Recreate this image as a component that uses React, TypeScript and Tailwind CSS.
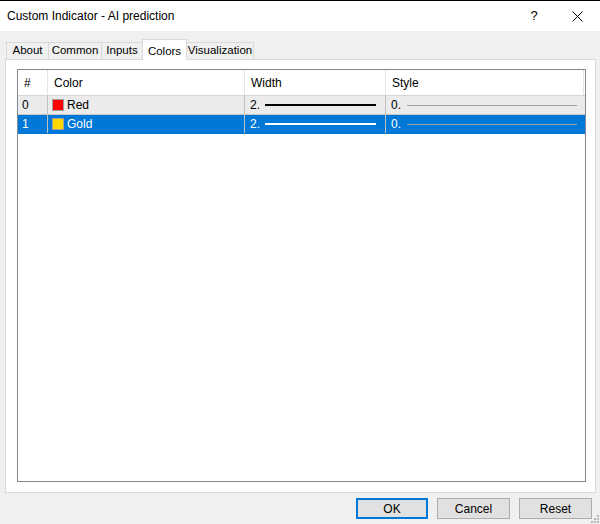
import React from 'react'

const FONT = { fontFamily: '"Liberation Sans", Arial, sans-serif' }

interface Tab {
  label: string
  cls: string
}

// widths include borders, laid edge to edge like the win32 tab strip
const TABS: Tab[] = [
  { label: 'About', cls: 'w-[42px] border-l' },
  { label: 'Common', cls: 'w-[53px] border-l' },
  { label: 'Inputs', cls: 'w-[41px] border-l' },
  { label: 'Colors', cls: 'w-[45px] border-l border-r' },
  { label: 'Visualization', cls: 'w-[67px] border-r' },
]

interface Row {
  idx: number
  name: string
  swatch: string
  selected: boolean
}

const ROWS: Row[] = [
  { idx: 0, name: 'Red', swatch: 'bg-[#ff0000]', selected: false },
  { idx: 1, name: 'Gold', swatch: 'bg-[#ffd700]', selected: true },
]

function ListRow({ row }: { row: Row }) {
  const sel = row.selected
  return (
    <div
      className={`flex h-[19px] text-[12px] leading-none border-b ${
        sel ? 'bg-[#0078d7] text-white border-[#0078d7]' : 'bg-[#ebebeb] text-black border-[#c8c8c8]'
      }`}
    >
      <div className="w-[30px] flex items-center pl-[4px] border-r border-[#c0c0c0]">{row.idx}</div>
      <div className="w-[197px] flex items-center pl-[4px] border-r border-[#c0c0c0]">
        <span className={`w-[12px] h-[12px] border border-[#a0a0a0] mr-[3px] ${row.swatch}`} />
        {row.name}
      </div>
      <div className="w-[141px] flex items-center pl-[5px] border-r border-[#c0c0c0]">
        <span>2.</span>
        <span className={`ml-[5px] w-[111px] h-[2px] ${sel ? 'bg-white' : 'bg-black'}`} />
      </div>
      <div className="w-[198px] flex items-center pl-[5px]">
        <span>0.</span>
        <span className="ml-[6px] w-[170px] h-px bg-[#a0a0a0]" />
      </div>
    </div>
  )
}

export default function App() {
  return (
    <div className="w-[600px] h-[524px] bg-[#f0f0f0] border-t border-black flex flex-col relative overflow-hidden" style={FONT}>
      {/* title bar */}
      <div className="h-[30px] bg-white flex items-center justify-between pl-[7px] text-[12px] text-black">
        <span className="pb-[1px]">Custom Indicator - AI prediction</span>
        <div className="flex items-center h-full">
          <span className="w-[40px] text-center text-[13px]">?</span>
          <span className="w-[46px] text-center">
            <svg width="11" height="11" viewBox="0 0 11 11" className="inline-block">
              <path d="M0.5 0.5 L10.5 10.5 M10.5 0.5 L0.5 10.5" stroke="#000" strokeWidth="1" />
            </svg>
          </span>
        </div>
      </div>

      {/* tabs */}
      <div className="mt-[8px] flex items-end h-[20px] pl-[6px] text-[11.5px] text-black">
        {TABS.map((t) => {
          const active = t.label === 'Colors'
          return (
            <div
              key={t.label}
              className={`${t.cls} flex justify-center whitespace-nowrap border-t border-[#d9d9d9] relative ${
                active ? 'h-[21px] -mb-px bg-white z-10 items-start pt-[3px]' : 'h-[17px] bg-[#f0f0f0] items-center'
              }`}
            >
              {t.label}
            </div>
          )
        })}
      </div>

      {/* tab panel */}
      <div className="ml-[5px] w-[591px] h-[434px] bg-white border border-[#d9d9d9] pt-[9px] pl-[11px] pr-[9px] pb-[10px]">
        <div className="w-full h-full border border-[#828790] bg-white flex flex-col">
          <div className="flex h-[26px] text-[12px] text-black border-b border-[#d5d5d5]">
            <div className="w-[30px] flex items-center pl-[6px] border-r border-[#e5e5e5]">#</div>
            <div className="w-[197px] flex items-center pl-[6px] border-r border-[#e5e5e5]">Color</div>
            <div className="w-[141px] flex items-center pl-[6px] border-r border-[#e5e5e5]">Width</div>
            <div className="w-[198px] flex items-center pl-[6px] border-r border-[#e5e5e5]">Style</div>
          </div>
          {ROWS.map((r) => (
            <ListRow key={r.idx} row={r} />
          ))}
        </div>
      </div>

      {/* buttons */}
      <div className="mt-[5px] flex justify-end gap-[9px] pr-[8px] text-[12px]">
        <button type="button" className="w-[72px] h-[21px] bg-[#e1e1e1] border-2 border-[#0078d7] text-black leading-none">
          OK
        </button>
        <button type="button" className="w-[73px] h-[21px] bg-[#e1e1e1] border border-[#adadad] text-black leading-none">
          Cancel
        </button>
        <button type="button" className="w-[73px] h-[21px] bg-[#e1e1e1] border border-[#adadad] text-black leading-none">
          Reset
        </button>
      </div>

      {/* resize grip */}
      <svg width="10" height="10" viewBox="0 0 10 10" className="absolute right-[1px] bottom-[1px]">
        {[
          [8, 2],
          [8, 5],
          [5, 5],
          [8, 8],
          [5, 8],
          [2, 8],
        ].map(([x, y], i) => (
          <rect key={i} x={x} y={y} width="2" height="2" fill="#b8b8b8" />
        ))}
      </svg>
    </div>
  )
}
